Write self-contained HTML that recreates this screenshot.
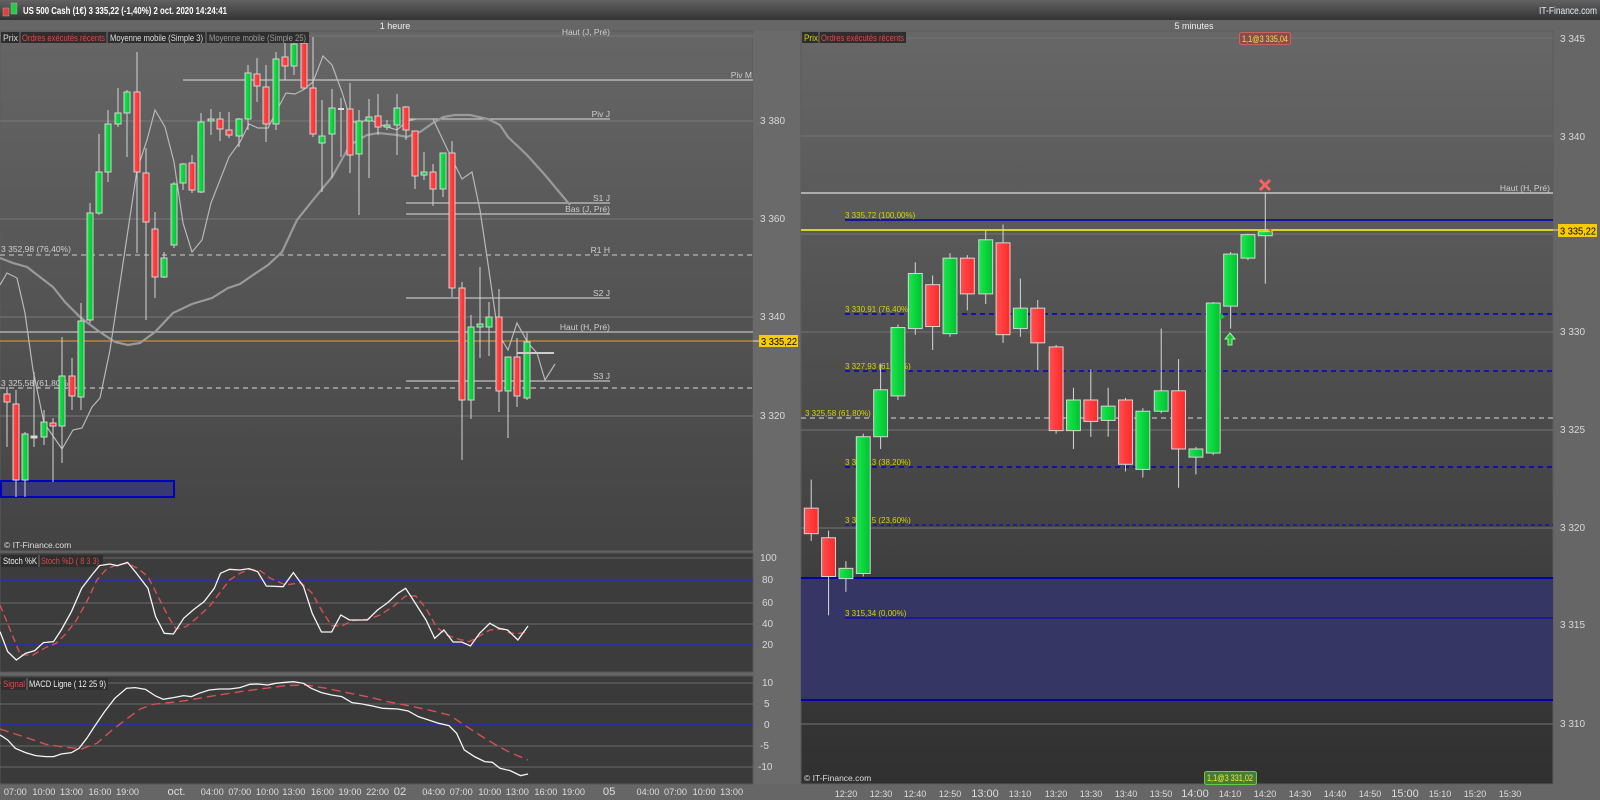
<!DOCTYPE html>
<html><head><meta charset="utf-8"><style>
html,body{margin:0;padding:0;background:#666;width:1600px;height:800px;overflow:hidden}
svg{display:block;font-family:"Liberation Sans",sans-serif}
.g{fill:url(#gg);stroke:#d4d4d4;stroke-width:1}
.r{fill:url(#rg);stroke:#d4d4d4;stroke-width:1}
.w{stroke:#d4d4d4;stroke-width:1}
.ax{fill:#d8d8d8;font-size:10px}
.lb{fill:#cfcfcf;font-size:8.5px}
.fib{fill:#d6d600;font-size:8px}
</style></head><body>
<svg width="1600" height="800" viewBox="0 0 1600 800" xmlns="http://www.w3.org/2000/svg">
<defs>
<linearGradient id="hd" x1="0" y1="0" x2="0" y2="1"><stop offset="0" stop-color="#626262"/><stop offset="1" stop-color="#333"/></linearGradient>
<linearGradient id="lc" x1="0" y1="0" x2="0" y2="1"><stop offset="0" stop-color="#666"/><stop offset="1" stop-color="#434343"/></linearGradient>
<linearGradient id="rc" x1="0" y1="0" x2="0" y2="1"><stop offset="0" stop-color="#676767"/><stop offset="1" stop-color="#303030"/></linearGradient>
<linearGradient id="gg" x1="0" y1="0" x2="1" y2="0"><stop offset="0" stop-color="#18e84c"/><stop offset="1" stop-color="#00c030"/></linearGradient>
<linearGradient id="rg" x1="0" y1="0" x2="1" y2="0"><stop offset="0" stop-color="#ff5050"/><stop offset="1" stop-color="#ff2828"/></linearGradient>
</defs>
<!-- header -->
<rect x="0" y="0" width="1600" height="20" fill="url(#hd)"/>
<rect x="3" y="8" width="6" height="8" fill="#e04040" stroke="#aaa" stroke-width=".5"/>
<rect x="11" y="3" width="6" height="11" fill="#20d040" stroke="#aaa" stroke-width=".5"/>
<text x="23" y="14" fill="#fff" font-size="10.5" font-weight="bold" textLength="204" lengthAdjust="spacingAndGlyphs">US 500 Cash (1€)   3 335,22 (-1,40%)   2 oct. 2020 14:24:41</text>
<text x="1597" y="14" fill="#e8eef8" font-size="10.5" text-anchor="end" textLength="58" lengthAdjust="spacingAndGlyphs">IT-Finance.com</text>
<rect x="0" y="20" width="1600" height="12" fill="#666"/>
<text x="395" y="29" fill="#eee" font-size="9" text-anchor="middle">1 heure</text>
<text x="1194" y="29" fill="#eee" font-size="9" text-anchor="middle">5 minutes</text>

<!-- left price panel -->
<rect x="0" y="31" width="753" height="520" fill="url(#lc)" stroke="#5c5c5c"/>
<rect x="753" y="31" width="47" height="753" fill="#6a6a6a"/>
<g stroke="#777" stroke-width="1">
<line x1="0" y1="36" x2="753" y2="36"/><line x1="0" y1="121" x2="753" y2="121"/><line x1="0" y1="219" x2="753" y2="219"/><line x1="0" y1="317" x2="753" y2="317"/><line x1="0" y1="416" x2="753" y2="416"/>
</g>
<g class="ax"><text x="760" y="124">3 380</text><text x="760" y="222">3 360</text><text x="760" y="320">3 340</text><text x="760" y="419">3 320</text></g>
<g stroke="#ddd" stroke-width="1">
<line x1="183" y1="80" x2="753" y2="80"/>
<line x1="406" y1="119" x2="610" y2="119"/>
<line x1="406" y1="203" x2="610" y2="203"/>
<line x1="406" y1="214" x2="610" y2="214"/>
<line x1="406" y1="298" x2="610" y2="298"/>
<line x1="0" y1="332" x2="753" y2="332"/>
<line x1="406" y1="381" x2="610" y2="381"/>
</g>
<line x1="0" y1="255" x2="753" y2="255" stroke="#ccc" stroke-dasharray="5,4"/>
<line x1="0" y1="388" x2="753" y2="388" stroke="#aaa" stroke-width="1.5" stroke-dasharray="5,4"/>
<line x1="0" y1="341" x2="753" y2="341" stroke="#f0a020" stroke-width="1"/>
<line x1="753" y1="341" x2="759" y2="341" stroke="#ddd"/>
<rect x="759" y="335" width="39" height="12" fill="#f8cc00"/>
<text x="761" y="345" font-size="10.5" fill="#000" textLength="36" lengthAdjust="spacingAndGlyphs">3 335,22</text>
<g class="lb" text-anchor="end">
<text x="610" y="35">Haut (J, Pré)</text><text x="752" y="78">Piv M</text><text x="610" y="117">Piv J</text>
<text x="610" y="201">S1 J</text><text x="610" y="212">Bas (J, Pré)</text><text x="610" y="253">R1 H</text>
<text x="610" y="296">S2 J</text><text x="610" y="330">Haut (H, Pré)</text><text x="610" y="379">S3 J</text>
</g>
<g class="lb"><text x="1" y="252">3 352,98 (76,40%)</text><text x="1" y="386">3 325,58 (61,80%)</text></g>
<rect x="1" y="481" width="173" height="16" fill="#3a3a72" stroke="#0000c0" stroke-width="2"/>
<text x="4" y="548" fill="#ddd" font-size="8.5">© IT-Finance.com</text>

<!-- MAs -->
<polyline fill="none" stroke="#9a9a9a" stroke-width="2.2" points="0,258 13,263 27,267 40,277 53,287 65,302 80,317 97,330 115,342 128,345 140,343 155,332 173,313 192,304 212,298 228,288 240,284 253,275 268,265 282,252 297,220 313,200 332,177 350,145 367,135 378,133 397,135 407,137 420,132 433,123 443,117 455,115 470,115 488,119 500,125 508,137 527,155 545,175 570,205"/>
<polyline fill="none" stroke="#b8b8b8" stroke-width="1.2" points="0,285 7,273 17,278 25,313 33,370 44,423 62,449 73,430 82,428 92,407 100,398 110,350 125,250 137,170 147,140 155,110 165,127 174,162 183,223 192,252 202,240 211,203 229,157 240,142 249,124 258,128 268,128 277,110 286,93 295,94 303,90 313,82 323,56 332,65 342,92 350,118 358,125 368,118 378,124 397,130 407,121 417,119 433,119 450,155 462,179 472,172 480,210 487,257 498,333 508,350 517,323 528,343 537,353 545,380 555,364"/>

<!-- left candles -->
<g>
<line class="w" x1="7" y1="387" x2="7" y2="447"/><rect class="r" x="4" y="394" width="6" height="8"/>
<line class="w" x1="16" y1="390" x2="16" y2="497"/><rect class="r" x="13" y="404" width="6" height="76"/>
<line class="w" x1="25" y1="432" x2="25" y2="497"/><rect class="g" x="22" y="434" width="6" height="46"/>
<line class="w" x1="34" y1="372" x2="34" y2="447"/><rect class="w" x="31" y="436" width="6" height="2" fill="#ddd"/>
<line class="w" x1="44" y1="410" x2="44" y2="445"/><rect class="g" x="41" y="422" width="6" height="15"/>
<line class="w" x1="53" y1="418" x2="53" y2="482"/><rect class="r" x="50" y="423" width="6" height="3"/>
<line class="w" x1="62" y1="337" x2="62" y2="463"/><rect class="g" x="59" y="376" width="6" height="50"/>
<line class="w" x1="72" y1="358" x2="72" y2="410"/><rect class="r" x="69" y="376" width="6" height="20"/>
<line class="w" x1="81" y1="303" x2="81" y2="410"/><rect class="g" x="78" y="321" width="6" height="76"/>
<line class="w" x1="90" y1="203" x2="90" y2="323"/><rect class="g" x="87" y="213" width="6" height="107"/>
<line class="w" x1="99" y1="134" x2="99" y2="215"/><rect class="g" x="96" y="172" width="6" height="41"/>
<line class="w" x1="108" y1="110" x2="108" y2="182"/><rect class="g" x="105" y="124" width="6" height="48"/>
<line class="w" x1="118" y1="88" x2="118" y2="127"/><rect class="g" x="115" y="113" width="6" height="11"/>
<line class="w" x1="127" y1="90" x2="127" y2="157"/><rect class="g" x="124" y="92" width="6" height="21"/>
<line class="w" x1="137" y1="52" x2="137" y2="253"/><rect class="r" x="134" y="92" width="6" height="80"/>
<line class="w" x1="146" y1="148" x2="146" y2="320"/><rect class="r" x="143" y="173" width="6" height="49"/>
<line class="w" x1="155" y1="212" x2="155" y2="298"/><rect class="r" x="152" y="229" width="6" height="48"/>
<line class="w" x1="164" y1="252" x2="164" y2="278"/><rect class="g" x="161" y="258" width="6" height="19"/>
<line class="w" x1="174" y1="182" x2="174" y2="248"/><rect class="g" x="171" y="184" width="6" height="61"/>
<line class="w" x1="183" y1="163" x2="183" y2="190"/><rect class="g" x="180" y="164" width="6" height="19"/>
<line class="w" x1="192" y1="155" x2="192" y2="193"/><rect class="r" x="189" y="163" width="6" height="27"/>
<line class="w" x1="201" y1="113" x2="201" y2="193"/><rect class="g" x="198" y="122" width="6" height="70"/>
<line class="w" x1="211" y1="109" x2="211" y2="135"/><rect class="g" x="208" y="119" width="6" height="2"/>
<line class="w" x1="220" y1="112" x2="220" y2="141"/><rect class="r" x="217" y="119" width="6" height="10"/>
<line class="w" x1="229" y1="112" x2="229" y2="138"/><rect class="r" x="226" y="130" width="6" height="5"/>
<line class="w" x1="239" y1="118" x2="239" y2="147"/><rect class="g" x="236" y="119" width="6" height="17"/>
<line class="w" x1="248" y1="65" x2="248" y2="130"/><rect class="g" x="245" y="73" width="6" height="46"/>
<line class="w" x1="257" y1="58" x2="257" y2="102"/><rect class="r" x="254" y="74" width="6" height="12"/>
<line class="w" x1="266" y1="65" x2="266" y2="142"/><rect class="r" x="263" y="87" width="6" height="37"/>
<line class="w" x1="276" y1="52" x2="276" y2="130"/><rect class="g" x="273" y="59" width="6" height="65"/>
<line class="w" x1="285" y1="43" x2="285" y2="80"/><rect class="r" x="282" y="57" width="6" height="9"/>
<line class="w" x1="294" y1="42" x2="294" y2="75"/><rect class="g" x="291" y="44" width="6" height="22"/>
<line class="w" x1="304" y1="32" x2="304" y2="90"/><rect class="r" x="301" y="43" width="6" height="45"/>
<line class="w" x1="313" y1="37" x2="313" y2="137"/><rect class="r" x="310" y="88" width="6" height="46"/>
<line class="w" x1="322" y1="100" x2="322" y2="192"/><rect class="g" x="319" y="136" width="6" height="7"/>
<line class="w" x1="332" y1="89" x2="332" y2="178"/><rect class="g" x="329" y="108" width="6" height="26"/>
<line class="w" x1="341" y1="98" x2="341" y2="157"/><rect x="338" y="108" width="6" height="2" fill="#ddd"/>
<line class="w" x1="350" y1="83" x2="350" y2="173"/><rect class="r" x="347" y="109" width="6" height="46"/>
<line class="w" x1="359" y1="110" x2="359" y2="215"/><rect class="g" x="356" y="121" width="6" height="33"/>
<line class="w" x1="369" y1="99" x2="369" y2="178"/><rect class="g" x="366" y="117" width="6" height="4"/>
<line class="w" x1="378" y1="94" x2="378" y2="135"/><rect class="r" x="375" y="116" width="6" height="11"/>
<line class="w" x1="387" y1="120" x2="387" y2="130"/><rect class="g" x="384" y="125" width="6" height="2"/>
<line class="w" x1="397" y1="94" x2="397" y2="155"/><rect class="g" x="394" y="108" width="6" height="17"/>
<line class="w" x1="406" y1="106" x2="406" y2="140"/><rect class="r" x="403" y="107" width="6" height="23"/>
<line class="w" x1="415" y1="131" x2="415" y2="189"/><rect class="r" x="412" y="131" width="6" height="45"/>
<line class="w" x1="424" y1="152" x2="424" y2="180"/><rect class="g" x="421" y="172" width="6" height="3"/>
<line class="w" x1="433" y1="164" x2="433" y2="206"/><rect class="r" x="430" y="172" width="6" height="17"/>
<line class="w" x1="443" y1="153" x2="443" y2="197"/><rect class="g" x="440" y="153" width="6" height="36"/>
<line class="w" x1="452" y1="141" x2="452" y2="297"/><rect class="r" x="449" y="153" width="6" height="135"/>
<line class="w" x1="462" y1="282" x2="462" y2="460"/><rect class="r" x="459" y="288" width="6" height="112"/>
<line class="w" x1="471" y1="315" x2="471" y2="419"/><rect class="g" x="468" y="327" width="6" height="73"/>
<line class="w" x1="480" y1="267" x2="480" y2="358"/><rect class="g" x="477" y="324" width="6" height="3"/>
<line class="w" x1="489" y1="302" x2="489" y2="356"/><rect class="g" x="486" y="317" width="6" height="10"/>
<line class="w" x1="499" y1="289" x2="499" y2="412"/><rect class="r" x="496" y="317" width="6" height="74"/>
<line class="w" x1="508" y1="357" x2="508" y2="438"/><rect class="g" x="505" y="357" width="6" height="34"/>
<line class="w" x1="517" y1="338" x2="517" y2="407"/><rect class="r" x="514" y="357" width="6" height="39"/>
<line class="w" x1="527" y1="333" x2="527" y2="400"/><rect class="g" x="524" y="342" width="6" height="56"/>
</g>
<line x1="517" y1="353" x2="554" y2="353" stroke="#ccc" stroke-width="2"/>

<!-- left tab bar -->
<rect x="1" y="32" width="308" height="11" fill="#2e2e2e"/>
<g font-size="9.5">
<text x="3" y="41" fill="#ddd" textLength="15" lengthAdjust="spacingAndGlyphs">Prix</text><line x1="20" y1="32" x2="20" y2="43" stroke="#777"/>
<text x="22" y="41" fill="#e04848" textLength="83" lengthAdjust="spacingAndGlyphs">Ordres exécutés récents</text><line x1="107" y1="32" x2="107" y2="43" stroke="#777"/>
<text x="110" y="41" fill="#ddd" textLength="93" lengthAdjust="spacingAndGlyphs">Moyenne mobile (Simple 3)</text><line x1="206" y1="32" x2="206" y2="43" stroke="#777"/>
<text x="209" y="41" fill="#9a9a9a" textLength="97" lengthAdjust="spacingAndGlyphs">Moyenne mobile (Simple 25)</text>
</g>

<!-- stoch panel -->
<rect x="0" y="553" width="753" height="119" fill="#3c3c3c" stroke="#555"/>
<g stroke="#6a6a6a"><line x1="0" y1="558" x2="753" y2="558"/><line x1="0" y1="603" x2="753" y2="603"/><line x1="0" y1="624" x2="753" y2="624"/></g>
<g stroke="#2828e0" stroke-width="1.2"><line x1="0" y1="580" x2="753" y2="580"/><line x1="0" y1="645" x2="753" y2="645"/></g>
<g class="ax" font-size="9.5"><text x="760" y="561">100</text><text x="762" y="583">80</text><text x="762" y="606">60</text><text x="762" y="627">40</text><text x="762" y="648">20</text></g>
<rect x="1" y="555" width="102" height="12" fill="#2e2e2e"/>
<text x="3" y="564" fill="#eee" font-size="9" textLength="34" lengthAdjust="spacingAndGlyphs">Stoch %K</text><line x1="39" y1="555" x2="39" y2="567" stroke="#777"/>
<text x="41" y="564" fill="#e04848" font-size="9" textLength="58" lengthAdjust="spacingAndGlyphs">Stoch %D ( 8 3 3)</text>
<g transform="translate(0,530) scale(0.5102,0.3333)" fill="none">
<polyline vector-effect="non-scaling-stroke" stroke="#d85050" stroke-width="1.4" stroke-dasharray="7,4" points="0,225 20,300 40,375 65,375 90,352 110,340 130,310 150,270 170,215 190,150 210,115 230,105 250,100 270,115 290,140 310,200 330,260 345,297 365,290 385,265 410,230 430,190 450,150 470,130 490,118 510,122 530,145 560,165 590,158 612,190 630,240 650,287 670,288 690,272 720,268 745,255 770,230 795,198 815,198 835,235 855,290 875,315 900,328 920,335 940,318 960,300 985,297 1000,310 1020,310 1035,305"/>
<polyline vector-effect="non-scaling-stroke" stroke="#f4f4f4" stroke-width="1.3" points="0,305 15,365 32,390 50,370 68,362 85,338 105,335 120,300 140,245 160,175 180,135 195,107 215,102 230,107 250,97 265,125 290,175 305,260 322,310 340,312 360,265 380,238 400,215 420,175 432,130 450,118 470,120 488,116 505,125 522,168 555,170 575,128 595,170 612,250 630,306 650,306 668,255 685,270 720,270 740,240 760,218 780,190 795,175 812,215 835,270 852,325 870,300 888,336 905,336 922,348 940,310 960,280 978,295 995,300 1015,330 1035,288"/>
</g>

<!-- macd panel -->
<rect x="0" y="676" width="753" height="108" fill="#3a3a3a" stroke="#555"/>
<g stroke="#6a6a6a"><line x1="0" y1="683" x2="753" y2="683"/><line x1="0" y1="704" x2="753" y2="704"/><line x1="0" y1="746" x2="753" y2="746"/><line x1="0" y1="767" x2="753" y2="767"/></g>
<line x1="0" y1="725" x2="753" y2="725" stroke="#2828e0" stroke-width="1.2"/>
<g class="ax" font-size="9.5"><text x="762" y="686">10</text><text x="764" y="707">5</text><text x="764" y="728">0</text><text x="760" y="749">-5</text><text x="758" y="770">-10</text></g>
<rect x="1" y="678" width="107" height="12" fill="#2e2e2e"/>
<text x="3" y="687" fill="#e04848" font-size="9" textLength="22" lengthAdjust="spacingAndGlyphs">Signal</text><line x1="27" y1="678" x2="27" y2="690" stroke="#777"/>
<text x="29" y="687" fill="#eee" font-size="9" textLength="77" lengthAdjust="spacingAndGlyphs">MACD Ligne ( 12 25 9)</text>
<g transform="translate(0,530) scale(0.5102,0.3333)" fill="none">
<polyline vector-effect="non-scaling-stroke" stroke="#d85050" stroke-width="1.4" stroke-dasharray="9,5" points="0,597 30,612 60,627 90,643 120,650 160,657 190,640 220,600 250,565 275,537 300,523 330,518 360,513 390,505 420,497 450,490 480,483 520,475 560,467 600,465 640,475 680,488 720,500 760,515 800,527 840,540 880,555 910,585 940,615 970,643 1000,668 1035,690"/>
<polyline vector-effect="non-scaling-stroke" stroke="#f4f4f4" stroke-width="1.3" points="0,615 15,630 30,655 50,668 70,677 90,680 105,680 120,672 140,668 155,655 170,625 185,590 205,545 225,505 248,475 265,473 285,478 305,498 320,508 340,503 360,497 375,500 390,490 410,480 430,477 450,477 470,473 490,463 505,462 525,465 540,460 560,457 575,455 595,460 610,475 630,488 650,495 670,500 690,518 710,522 730,528 750,535 780,537 800,543 820,560 840,570 860,580 880,587 895,610 910,660 930,680 950,695 965,697 980,715 1000,722 1020,737 1035,732"/>
</g>

<!-- right chart -->
<rect x="801" y="31" width="752" height="753" fill="url(#rc)" stroke="#5c5c5c"/>
<g stroke="#747474"><line x1="801" y1="38" x2="1553" y2="38"/><line x1="801" y1="136" x2="1553" y2="136"/><line x1="801" y1="234" x2="1553" y2="234"/><line x1="801" y1="332" x2="1553" y2="332"/><line x1="801" y1="430" x2="1553" y2="430"/><line x1="801" y1="528" x2="1553" y2="528"/><line x1="801" y1="625" x2="1553" y2="625"/><line x1="801" y1="724" x2="1553" y2="724"/></g>
<g class="ax"><text x="1560" y="42">3 345</text><text x="1560" y="140">3 340</text><text x="1560" y="335">3 330</text><text x="1560" y="433">3 325</text><text x="1560" y="531">3 320</text><text x="1560" y="628">3 315</text><text x="1560" y="727">3 310</text></g>
<rect x="801" y="577" width="752" height="123" fill="#363664"/>
<line x1="801" y1="578" x2="1553" y2="578" stroke="#0000b0" stroke-width="2"/>
<line x1="801" y1="700" x2="1553" y2="700" stroke="#0000b0" stroke-width="2"/>
<line x1="801" y1="193" x2="1553" y2="193" stroke="#ddd" stroke-width="1.2"/>
<text x="1550" y="191" class="lb" text-anchor="end">Haut (H, Pré)</text>
<line x1="845" y1="220" x2="1553" y2="220" stroke="#0000b0" stroke-width="1.5"/>
<line x1="801" y1="230" x2="1553" y2="230" stroke="#ffff00" stroke-width="1.5"/>
<line x1="1553" y1="230" x2="1558" y2="230" stroke="#ddd"/>
<rect x="1558" y="224" width="39" height="13" fill="#f8cc00"/>
<text x="1560" y="234.5" font-size="10.5" fill="#000" textLength="36" lengthAdjust="spacingAndGlyphs">3 335,22</text>
<g stroke="#0000c8" stroke-dasharray="5,4" stroke-width="1.6">
<line x1="845" y1="314" x2="1553" y2="314"/><line x1="845" y1="371" x2="1553" y2="371"/><line x1="845" y1="467" x2="1553" y2="467"/></g>
<line x1="845" y1="525" x2="1553" y2="525" stroke="#0000c8" stroke-dasharray="4,3" stroke-width="1"/>
<line x1="845" y1="618" x2="1553" y2="618" stroke="#0000c8" stroke-width="1"/>
<line x1="801" y1="418" x2="1553" y2="418" stroke="#aaa" stroke-width="1.5" stroke-dasharray="5,4"/>
<g class="fib"><text x="845" y="218">3 335,72 (100,00%)</text><text x="845" y="312">3 330,91 (76,40%)</text><text x="845" y="369">3 327,93 (61,80%)</text><text x="805" y="416">3 325,58 (61,80%)</text><text x="845" y="465">3 323,13 (38,20%)</text><text x="845" y="523">3 320,15 (23,60%)</text><text x="845" y="616">3 315,34 (0,00%)</text></g>

<g transform="scale(1.0204)">
<line class="w" x1="795" y1="470" x2="795" y2="530"/><rect class="r" x="788.2" y="498" width="13.6" height="25"/>
<line class="w" x1="812" y1="520" x2="812" y2="603"/><rect class="r" x="805.2" y="527" width="13.6" height="38"/>
<line class="w" x1="829" y1="550" x2="829" y2="580"/><rect class="g" x="822.2" y="557" width="13.6" height="10"/>
<line class="w" x1="846" y1="425" x2="846" y2="565"/><rect class="g" x="839.2" y="428" width="13.6" height="134"/>
<line class="w" x1="863" y1="357" x2="863" y2="440"/><rect class="g" x="856.2" y="382" width="13.6" height="46"/>
<line class="w" x1="880" y1="318" x2="880" y2="392"/><rect class="g" x="873.2" y="321" width="13.6" height="67"/>
<line class="w" x1="897" y1="257" x2="897" y2="328"/><rect class="g" x="890.2" y="268" width="13.6" height="54"/>
<line class="w" x1="914" y1="270" x2="914" y2="343"/><rect class="r" x="907.2" y="279" width="13.6" height="41"/>
<line class="w" x1="931" y1="248" x2="931" y2="330"/><rect class="g" x="924.2" y="253" width="13.6" height="74"/>
<line class="w" x1="948" y1="250" x2="948" y2="304"/><rect class="r" x="941.2" y="253" width="13.6" height="35"/>
<line class="w" x1="966" y1="225" x2="966" y2="298"/><rect class="g" x="959.2" y="235" width="13.6" height="53"/>
<line class="w" x1="983" y1="220" x2="983" y2="336"/><rect class="r" x="976.2" y="238" width="13.6" height="90"/>
<line class="w" x1="1000" y1="273" x2="1000" y2="330"/><rect class="g" x="993.2" y="302" width="13.6" height="20"/>
<line class="w" x1="1017" y1="294" x2="1017" y2="363"/><rect class="r" x="1010.2" y="302" width="13.6" height="34"/>
<line class="w" x1="1035" y1="338" x2="1035" y2="425"/><rect class="r" x="1028.2" y="340" width="13.6" height="82"/>
<line class="w" x1="1052" y1="380" x2="1052" y2="440"/><rect class="g" x="1045.2" y="392" width="13.6" height="30"/>
<line class="w" x1="1069" y1="362" x2="1069" y2="428"/><rect class="r" x="1062.2" y="392" width="13.6" height="21"/>
<line class="w" x1="1086" y1="380" x2="1086" y2="428"/><rect class="g" x="1079.2" y="398" width="13.6" height="14"/>
<line class="w" x1="1103" y1="390" x2="1103" y2="462"/><rect class="r" x="1096.2" y="392" width="13.6" height="63"/>
<line class="w" x1="1120" y1="400" x2="1120" y2="468"/><rect class="g" x="1113.2" y="403" width="13.6" height="57"/>
<line class="w" x1="1138" y1="322" x2="1138" y2="405"/><rect class="g" x="1131.2" y="383" width="13.6" height="20"/>
<line class="w" x1="1155" y1="352" x2="1155" y2="478"/><rect class="r" x="1148.2" y="383" width="13.6" height="57"/>
<line class="w" x1="1172" y1="438" x2="1172" y2="465"/><rect class="g" x="1165.2" y="440" width="13.6" height="8"/>
<line class="w" x1="1189" y1="296" x2="1189" y2="446"/><rect class="g" x="1182.2" y="297" width="13.6" height="147"/>
<line class="w" x1="1206" y1="247" x2="1206" y2="322"/><rect class="g" x="1199.2" y="249" width="13.6" height="51"/>
<line class="w" x1="1223" y1="229" x2="1223" y2="255"/><rect class="g" x="1216.2" y="230" width="13.6" height="23"/>
<line class="w" x1="1240" y1="188" x2="1240" y2="278"/><rect class="g" x="1233.2" y="227" width="13.6" height="4"/>
<path d="M1243 225 L1246 224 L1246 229 Z" fill="#ff5050"/>
<!-- time axis labels -->
<g fill="#ddd" font-size="9" text-anchor="middle">
<text x="15" y="779">07:00</text><text x="43" y="779">10:00</text><text x="70" y="779">13:00</text><text x="98" y="779">16:00</text><text x="125" y="779">19:00</text><text x="173" y="779" font-size="11">oct.</text><text x="208" y="779">04:00</text><text x="235" y="779">07:00</text><text x="262" y="779">10:00</text><text x="288" y="779">13:00</text><text x="316" y="779">16:00</text><text x="343" y="779">19:00</text><text x="370" y="779">22:00</text><text x="392" y="779" font-size="11">02</text><text x="425" y="779">04:00</text><text x="452" y="779">07:00</text><text x="480" y="779">10:00</text><text x="507" y="779">13:00</text><text x="535" y="779">16:00</text><text x="562" y="779">19:00</text><text x="597" y="779" font-size="11">05</text><text x="635" y="779">04:00</text><text x="662" y="779">07:00</text><text x="690" y="779">10:00</text><text x="717" y="779">13:00</text>
</g>
</g>
<!-- marks -->
<g transform="translate(1265,185)"><path d="M-5,-4 L-4,-5 L0,-1 L4,-5 L5,-4 L1,0 L5,4 L4,5 L0,1 L-4,5 L-5,4 L-1,0 Z" fill="#ff6060" stroke="#ff6060" stroke-width="1.5"/></g>
<path d="M1230,333 L1235,339 L1232,339 L1232,345 L1228,345 L1228,339 L1225,339 Z" fill="#20c040" stroke="#90ff90" stroke-width="1"/>
<path d="M1220,313 L1225,317 L1220,320 Z" fill="#20c040"/>
<rect x="1239.5" y="32.5" width="51" height="12" rx="2" fill="#8a4c4c" stroke="#d06060"/>
<text x="1265" y="42" fill="#f0e040" font-size="9" text-anchor="middle" textLength="46" lengthAdjust="spacingAndGlyphs">1,1@3 335,04</text>
<rect x="1204.5" y="771.5" width="52" height="13" rx="2" fill="#4a7a3a" stroke="#60d040"/>
<text x="1230" y="781" fill="#f0f020" font-size="9" text-anchor="middle" textLength="46" lengthAdjust="spacingAndGlyphs">1,1@3 331,02</text>
<text x="804" y="781" fill="#ddd" font-size="8.5">© IT-Finance.com</text>
<!-- right tab -->
<rect x="802" y="32" width="104" height="11" fill="#2e2e2e"/>
<text x="804" y="41" fill="#d8d800" font-size="9.5" textLength="14" lengthAdjust="spacingAndGlyphs">Prix</text><line x1="819" y1="32" x2="819" y2="43" stroke="#777"/>
<text x="821" y="41" fill="#e04848" font-size="9.5" textLength="83" lengthAdjust="spacingAndGlyphs">Ordres exécutés récents</text>
<!-- right time axis -->
<g fill="#ddd" font-size="9" text-anchor="middle">
<text x="846" y="797">12:20</text><text x="881" y="797">12:30</text><text x="915" y="797">12:40</text><text x="950" y="797">12:50</text><text x="985" y="797" font-size="11">13:00</text><text x="1020" y="797">13:10</text><text x="1056" y="797">13:20</text><text x="1091" y="797">13:30</text><text x="1126" y="797">13:40</text><text x="1161" y="797">13:50</text><text x="1195" y="797" font-size="11">14:00</text><text x="1230" y="797">14:10</text><text x="1265" y="797">14:20</text><text x="1300" y="797">14:30</text><text x="1335" y="797">14:40</text><text x="1370" y="797">14:50</text><text x="1405" y="797" font-size="11">15:00</text><text x="1440" y="797">15:10</text><text x="1475" y="797">15:20</text><text x="1510" y="797">15:30</text>
</g>
</svg>
</body></html>
